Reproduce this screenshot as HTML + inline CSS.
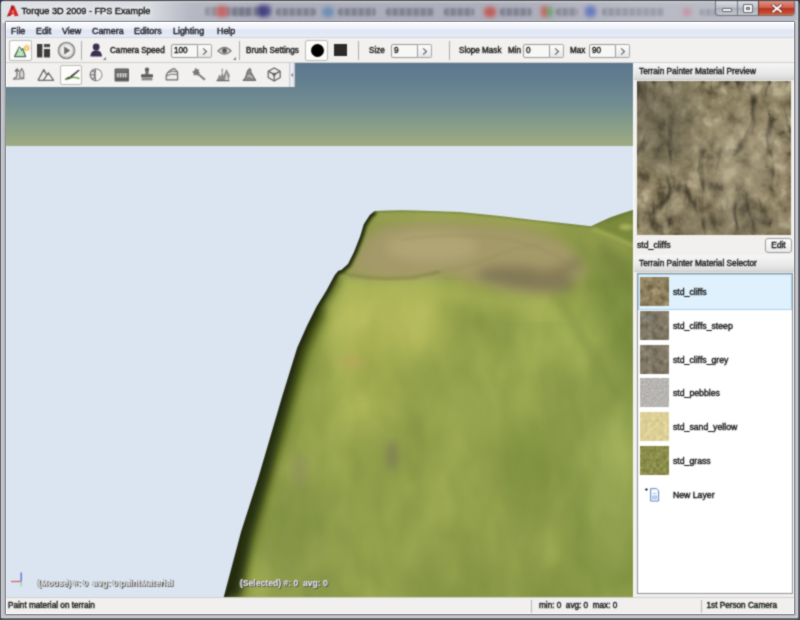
<!DOCTYPE html>
<html>
<head>
<meta charset="utf-8">
<title>Torque 3D 2009 - FPS Example</title>
<style>
*{box-sizing:border-box;margin:0;padding:0}
html,body{width:800px;height:620px;overflow:hidden}
body{position:relative;background:#c3ccd6;font-family:"Liberation Sans",sans-serif;font-size:11px;color:#0c0c0c;-webkit-text-stroke:0.38px #151515}
.abs{position:absolute}
.t{position:absolute;white-space:nowrap;line-height:14px;height:14px}
/* window frame */
#frame{left:0;top:0;width:800px;height:620px;background:#bdbfc4;overflow:hidden;filter:url(#soft)}
#titlebg{left:0;top:0;width:800px;height:23px;background:linear-gradient(#b3b4be,#adaebb 30%,#acadba 85%,#c6c9d0 92%)}
.blob{position:absolute;border-radius:40%;filter:blur(2px)}
.smg{filter:blur(1.3px);border-radius:3px}
#title{left:21.5px;top:3px;font-size:9.15px;line-height:16px;height:16px;color:#111;text-shadow:0 0 5px #fff,0 0 5px #fff,0 0 8px #fff}
/* content */
#content{left:6px;top:22px;width:788px;height:592px;background:#f1f0ee;overflow:hidden;filter:url(#soft)}
#menubar{left:0;top:0;width:788px;height:16px;background:linear-gradient(#fbfcfe,#eef1f9 45%,#dfe5f3 55%,#e6ebf7);border-bottom:1px solid #cfd5e2}
#menubar .t{top:2px;font-size:8.9px;line-height:14px;color:#1b1b2a}
#tb1{left:0;top:16px;width:788px;height:25px;background:#f2f1ef;border-bottom:1px solid #cfcfcf}
#tb1 .t{top:6px;font-size:8.15px;line-height:14px}
.sep{position:absolute;top:3px;width:1px;height:19px;background:#a9a9a9}
.inp{position:absolute;top:6px;height:14px;background:#f7f7f6;border:1px solid #999;border-radius:2px 0 0 2px;font-size:8.2px;line-height:12px;padding-left:2px}
.spin{position:absolute;top:6px;height:14px;width:14px;background:linear-gradient(#fdfdfd,#e6e6e6);border:1px solid #a5a5a5;border-left:none;border-radius:0 2px 2px 0}
.spin:after{content:"";position:absolute;left:2.5px;top:3.5px;width:4px;height:4px;border-top:1.6px solid #555;border-right:1.6px solid #555;transform:rotate(45deg)}
.selbtn{position:absolute;background:#fcfcfb;border:1px solid #b9b9b4;border-radius:2px}
#tb2{left:0;top:41px;width:288px;height:24px;background:#f2f1ef}
#tb2h{left:283px;top:41px;width:6px;height:24px;background:linear-gradient(90deg,#c3c7ce,#f2f3f6 45%,#eceef1 60%,#bcc1c9)}
/* viewport */
#view{left:0;top:41px;width:627px;height:534px;overflow:hidden;background:#dbe5f1}
#sky{left:0;top:0;width:627px;height:83px;background:linear-gradient(#5c768f,#65808f 25%,#728d90 50%,#889d88 75%,#9fab82)}
/* right panel */
#panel{left:627px;top:41px;width:161px;height:534px;background:#f1f0ee;border-left:1px solid #fafafa}
.hdr{position:absolute;left:0;width:160px;height:17px;background:linear-gradient(#f6f6f6,#e9e9e9 60%,#d9d9d9);border-bottom:1px solid #c8c8c8}
.hdr .t{left:5px;top:2px;font-size:8.25px;line-height:14px;color:#222}
#list{left:3px;top:210px;width:156px;height:321px;background:#fff;border:1px solid #8a8f96}
.row{position:absolute;left:0;width:154px;height:34px}
.row .t{left:35px;top:10px;font-size:8.7px;line-height:14px}
.th{position:absolute;left:2px;top:2px;width:29px;height:29px}
/* status */
#status{left:0;top:575px;width:788px;height:17px;background:#f1f0ee;border-top:1px solid #cfcfcf}
#status .t{top:1px;font-size:8.2px;line-height:14px}
.ssep{position:absolute;top:2px;width:1px;height:13px;background:#b5b5b5}
.ov{position:absolute;font-size:8.6px;font-weight:bold;color:#ececec;line-height:12px;white-space:nowrap;-webkit-text-stroke:0;text-shadow:1px 1px 0 #4a4a4a,-1px 0 0 #8a8a8a}
</style>
</head>
<body>

<svg width="0" height="0" style="position:absolute">
  <defs>
    <filter id="rock" x="0" y="0" width="100%" height="100%" color-interpolation-filters="sRGB">
      <feTurbulence type="fractalNoise" baseFrequency="0.06" numOctaves="5" seed="7" result="n"/>
      <feColorMatrix in="n" type="matrix" values="1.3 1.3 0 0 -0.8  1.3 1.3 0 0 -0.8  1.3 1.3 0 0 -0.8  0 0 0 0 1"/>
      <feComponentTransfer result="base">
        <feFuncR type="table" tableValues="0.34 0.44 0.51 0.56 0.60 0.66 0.72"/>
        <feFuncG type="table" tableValues="0.31 0.40 0.465 0.515 0.555 0.615 0.675"/>
        <feFuncB type="table" tableValues="0.23 0.30 0.355 0.395 0.435 0.495 0.555"/>
      </feComponentTransfer>
      <feTurbulence type="turbulence" baseFrequency="0.03 0.014" numOctaves="3" seed="23" result="v"/>
      <feColorMatrix in="v" type="matrix" values="1 0 0 0 0  1 0 0 0 0  1 0 0 0 0  0 0 0 0 1"/>
      <feComponentTransfer result="veins">
        <feFuncR type="table" tableValues="0.5 0.6 0.76 0.92 1 1 1 1 1 1 1 1 1 1 1 1 1 1 1 1"/>
        <feFuncG type="table" tableValues="0.5 0.6 0.76 0.92 1 1 1 1 1 1 1 1 1 1 1 1 1 1 1 1"/>
        <feFuncB type="table" tableValues="0.5 0.6 0.76 0.92 1 1 1 1 1 1 1 1 1 1 1 1 1 1 1 1"/>
      </feComponentTransfer>
      <feBlend in="base" in2="veins" mode="multiply"/>
    </filter>
    <filter id="rockgrey" x="0" y="0" width="100%" height="100%" color-interpolation-filters="sRGB">
      <feTurbulence type="fractalNoise" baseFrequency="0.16" numOctaves="4" seed="11" result="n"/>
      <feColorMatrix in="n" type="matrix" values="1.3 1.3 0 0 -0.8  1.3 1.3 0 0 -0.8  1.3 1.3 0 0 -0.8  0 0 0 0 1"/>
      <feComponentTransfer>
        <feFuncR type="table" tableValues="0.40 0.46 0.50 0.54 0.59"/>
        <feFuncG type="table" tableValues="0.37 0.43 0.465 0.50 0.55"/>
        <feFuncB type="table" tableValues="0.31 0.36 0.395 0.43 0.48"/>
      </feComponentTransfer>
    </filter>
    <filter id="rocksm" x="0" y="0" width="100%" height="100%" color-interpolation-filters="sRGB">
      <feTurbulence type="fractalNoise" baseFrequency="0.16" numOctaves="4" seed="5" result="n"/>
      <feColorMatrix in="n" type="matrix" values="1.3 1.3 0 0 -0.8  1.3 1.3 0 0 -0.8  1.3 1.3 0 0 -0.8  0 0 0 0 1"/>
      <feComponentTransfer>
        <feFuncR type="table" tableValues="0.44 0.51 0.56 0.60 0.66"/>
        <feFuncG type="table" tableValues="0.39 0.46 0.50 0.54 0.60"/>
        <feFuncB type="table" tableValues="0.27 0.33 0.37 0.41 0.47"/>
      </feComponentTransfer>
    </filter>
    <filter id="pebble" x="0" y="0" width="100%" height="100%" color-interpolation-filters="sRGB">
      <feTurbulence type="fractalNoise" baseFrequency="0.5" numOctaves="2" seed="2" result="n"/>
      <feColorMatrix in="n" type="matrix" values=".14 .14 0 0 0.575  .14 .14 0 0 0.565  .14 .14 0 0 0.555  0 0 0 0 1"/>
    </filter>
    <filter id="sand" x="0" y="0" width="100%" height="100%" color-interpolation-filters="sRGB">
      <feTurbulence type="fractalNoise" baseFrequency="0.25" numOctaves="3" seed="4" result="n"/>
      <feColorMatrix in="n" type="matrix" values=".12 .12 0 0 0.745  .12 .12 0 0 0.695  .12 .12 0 0 0.47  0 0 0 0 1"/>
    </filter>
    <filter id="grass" x="0" y="0" width="100%" height="100%" color-interpolation-filters="sRGB">
      <feTurbulence type="fractalNoise" baseFrequency="0.3" numOctaves="3" seed="9" result="n"/>
      <feColorMatrix in="n" type="matrix" values=".18 .18 0 0 0.36  .18 .18 0 0 0.37  .1 .1 0 0 0.19  0 0 0 0 1"/>
    </filter>
    <filter id="soft" x="0" y="0" width="100%" height="100%" color-interpolation-filters="sRGB"><feConvolveMatrix order="3" kernelMatrix="1 2 1 2 8 2 1 2 1" divisor="20" edgeMode="duplicate" preserveAlpha="true"/></filter>
    <filter id="cb" x="-20%" y="-20%" width="140%" height="140%"><feGaussianBlur stdDeviation="1.1"/></filter>
    <filter id="cb2" x="-20%" y="-20%" width="140%" height="140%"><feGaussianBlur stdDeviation="9"/></filter>
  </defs>
</svg>
<div id="frame" class="abs">
  <div id="titlebg" class="abs">
    <div class="blob smg" style="left:205px;top:7px;width:60px;height:9px;background:repeating-linear-gradient(90deg,#5f6070 0 2px,rgba(110,112,128,.35) 2px 3.5px,#6a6b7c 3.5px 5px,rgba(120,122,136,.2) 5px 7px);opacity:.75"></div>
    <div class="blob" style="left:216px;top:6px;width:12px;height:11px;background:#d8433c;opacity:.8"></div>
    <div class="blob smg" style="left:232px;top:8px;width:18px;height:8px;background:repeating-linear-gradient(90deg,#5f6070 0 2px,rgba(110,112,128,.35) 2px 3.5px,#6a6b7c 3.5px 5px,rgba(120,122,136,.2) 5px 7px);opacity:.75"></div>
    <div class="blob" style="left:257px;top:5px;width:14px;height:12px;background:#34307a;opacity:.8"></div>
    <div class="blob smg" style="left:276px;top:8px;width:40px;height:8px;background:repeating-linear-gradient(90deg,#5f6070 0 2px,rgba(110,112,128,.35) 2px 3.5px,#6a6b7c 3.5px 5px,rgba(120,122,136,.2) 5px 7px);opacity:.75"></div>
    <div class="blob" style="left:322px;top:7px;width:12px;height:10px;background:#5c86b4;opacity:.8"></div>
    <div class="blob smg" style="left:338px;top:8px;width:38px;height:8px;background:repeating-linear-gradient(90deg,#5f6070 0 2px,rgba(110,112,128,.35) 2px 3.5px,#6a6b7c 3.5px 5px,rgba(120,122,136,.2) 5px 7px);opacity:.75"></div>
    <div class="blob smg" style="left:386px;top:8px;width:48px;height:8px;background:repeating-linear-gradient(90deg,#5f6070 0 2px,rgba(110,112,128,.35) 2px 3.5px,#6a6b7c 3.5px 5px,rgba(120,122,136,.2) 5px 7px);opacity:.75"></div>
    <div class="blob smg" style="left:444px;top:8px;width:30px;height:8px;background:repeating-linear-gradient(90deg,#5f6070 0 2px,rgba(110,112,128,.35) 2px 3.5px,#6a6b7c 3.5px 5px,rgba(120,122,136,.2) 5px 7px);opacity:.75"></div>
    <div class="blob" style="left:484px;top:7px;width:12px;height:10px;background:#c8463e;opacity:.8"></div>
    <div class="blob smg" style="left:500px;top:8px;width:32px;height:8px;background:repeating-linear-gradient(90deg,#5f6070 0 2px,rgba(110,112,128,.35) 2px 3.5px,#6a6b7c 3.5px 5px,rgba(120,122,136,.2) 5px 7px);opacity:.75"></div>
    <div class="blob" style="left:541px;top:6px;width:7px;height:11px;background:#c94a38;opacity:.8"></div>
    <div class="blob" style="left:547px;top:7px;width:6px;height:10px;background:#4e9a4a;opacity:.8"></div>
    <div class="blob smg" style="left:556px;top:8px;width:22px;height:8px;background:repeating-linear-gradient(90deg,#5f6070 0 2px,rgba(110,112,128,.35) 2px 3.5px,#6a6b7c 3.5px 5px,rgba(120,122,136,.2) 5px 7px);opacity:.75"></div>
    <div class="blob" style="left:585px;top:6px;width:11px;height:11px;background:#3553b8;opacity:.8"></div>
    <div class="blob smg" style="left:602px;top:8px;width:62px;height:8px;background:repeating-linear-gradient(90deg,#5f6070 0 2px,rgba(110,112,128,.35) 2px 3.5px,#6a6b7c 3.5px 5px,rgba(120,122,136,.2) 5px 7px);opacity:.75"></div>
    <div class="blob" style="left:683px;top:8px;width:8px;height:8px;background:#c85a78;opacity:.7"></div>
    <div class="blob smg" style="left:700px;top:9px;width:26px;height:7px;background:repeating-linear-gradient(90deg,#5f6070 0 2px,rgba(110,112,128,.35) 2px 3.5px,#6a6b7c 3.5px 5px,rgba(120,122,136,.2) 5px 7px);opacity:.75"></div>
  </div>
  <div class="abs" style="left:0;top:0;width:800px;height:23px;background:linear-gradient(90deg,rgba(226,229,233,.92) 0,rgba(222,225,230,.88) 150px,rgba(200,203,210,.35) 190px,rgba(170,172,184,0) 260px,rgba(170,172,184,0) 520px,rgba(205,208,214,.35) 640px,rgba(205,208,214,.35) 800px)"></div>
  <div class="abs" style="left:0;top:0;width:800px;height:1px;background:#45464c"></div>
  <div class="abs" style="left:1px;top:1px;width:798px;height:1px;background:#dcdee2"></div>
  <div class="abs" style="left:0;top:0;width:1px;height:620px;background:#4b4d55"></div>
  <div class="abs" style="left:1px;top:1px;width:1px;height:618px;background:#e4e6ea"></div>
  <div class="abs" style="left:798px;top:0;width:2px;height:620px;background:#55575f"></div>
  <div class="abs" style="left:797px;top:1px;width:1px;height:618px;background:#e1e3e7"></div>
  <div class="abs" style="left:0;top:618px;width:800px;height:2px;background:#5a5c62"></div>
  <div class="abs" style="left:1px;top:617px;width:797px;height:1px;background:#e3e5e8"></div>
  <div class="abs" style="left:5px;top:21px;width:790px;height:594px;border:1px solid #75777d;border-radius:1px"></div>
  <!-- corners -->
  <svg class="abs" style="left:0;top:0" width="6" height="6"><path d="M0,0H6Q0,0 0,6Z" fill="#2b2c4f"/></svg>
  <svg class="abs" style="left:794px;top:0" width="6" height="6"><path d="M6,0H0Q6,0 6,6Z" fill="#33343c"/></svg>
  <svg class="abs" style="left:0;top:614px" width="6" height="6"><path d="M0,6H6Q0,6 0,0Z" fill="#4a4b52"/></svg>
  <svg class="abs" style="left:794px;top:614px" width="6" height="6"><path d="M6,6H0Q6,6 6,0Z" fill="#4a4b52"/></svg>
  <!-- app icon -->
  <svg class="abs" style="left:6px;top:4px" width="14" height="14" viewBox="0 0 14 14"><path d="M5.6,1.2 L8.2,1.8 L12.6,11.8 L8.8,12.2 L7.4,9.6 L4.6,11.6 L1,12.4 Z" fill="#d8262a"/><path d="M5.8,1 L7.4,4.4 L5.2,5.6 Z" fill="#5e1f22"/><path d="M6.8,6 L8.2,8.6 L5.8,8.8Z" fill="#f2a0a0"/><path d="M1,12.4 L3,9.4 L4.6,11.6Z" fill="#7a2024"/></svg>
  <div id="title" class="t">Torque 3D 2009 - FPS Example</div>
  <!-- window buttons -->
  <div class="abs" style="left:715px;top:1px;width:80px;height:15px;border:1px solid #6e7078;border-top:none;border-radius:0 0 4px 4px;background:linear-gradient(#d9dce1,#bfc3ca 45%,#a9adb6 50%,#c2c6cd);overflow:hidden">
    <div class="abs" style="left:21px;top:0;width:1px;height:15px;background:#74767e"></div>
    <div class="abs" style="left:42px;top:0;width:37px;height:15px;border-left:1px solid #6a3a36;background:linear-gradient(#dc9486,#cd5f4e 45%,#ba3422 50%,#c8492f 80%,#dd7f52)"></div>
    <div class="abs" style="left:6px;top:7px;width:10px;height:4px;background:#fafafa;border:1px solid #62646b;border-radius:1px"></div>
    <div class="abs" style="left:27px;top:3px;width:10px;height:9px;background:#fafafa;border:1px solid #62646b;border-radius:1px"></div>
    <div class="abs" style="left:30px;top:6px;width:4px;height:3px;background:#b8bcc4;border:1px solid #62646b"></div>
    <svg class="abs" style="left:55px;top:3px" width="12" height="9" viewBox="0 0 12 9"><path d="M2.2,1.4 L9.8,7.6 M9.8,1.4 L2.2,7.6" stroke="#6a3030" stroke-width="3.4" stroke-linecap="square"/><path d="M2.2,1.4 L9.8,7.6 M9.8,1.4 L2.2,7.6" stroke="#fdfdfd" stroke-width="2" stroke-linecap="square"/></svg>
  </div>
</div>
<div id="content" class="abs">
  <div id="menubar" class="abs">
    <div class="t" style="left:5px">File</div>
    <div class="t" style="left:30px">Edit</div>
    <div class="t" style="left:56px">View</div>
    <div class="t" style="left:86px">Camera</div>
    <div class="t" style="left:128px">Editors</div>
    <div class="t" style="left:167px">Lighting</div>
    <div class="t" style="left:211px">Help</div>
  </div>
  <div id="tb1" class="abs">
    <div class="selbtn" style="left:3px;top:2px;width:23px;height:21px"></div>

    <svg class="abs" style="left:6px;top:4px" width="19" height="17" viewBox="0 0 19 17"><circle cx="14.6" cy="6.2" r="2.3" fill="#f8e27a" stroke="#eea64a" stroke-width=".8"/><path d="M14.6,2.4 v1 M17.6,3.2 l-.8,.8 M18.6,6.2 h-1.1 M17.6,9.2 l-.8,-.8 M11.8,3.4 l.7,.7" stroke="#ee9a3a" stroke-width=".7"/><path d="M2.6,14.6 L7.4,5 L9.4,8 L10.6,6.6 L13.6,14.6 Z" fill="#b9e6bd" stroke="#4f6a52" stroke-width="1.3" stroke-linejoin="round"/><path d="M6.4,8 L7.4,5.4 L9,8.2" fill="#eef8ee"/></svg>
    <svg class="abs" style="left:31px;top:6px" width="14" height="14" viewBox="0 0 14 14"><rect x="0" y="0" width="5.4" height="13.4" fill="#3b3b3b"/><rect x="7" y="0" width="6" height="3.2" fill="#4a4a4a"/><rect x="7" y="5" width="6" height="8.4" fill="#3b3b3b"/></svg>
    <svg class="abs" style="left:51px;top:3px" width="19" height="19" viewBox="0 0 19 19"><circle cx="9.5" cy="9.5" r="8" fill="#ededed" stroke="#858585" stroke-width="1.6"/><circle cx="9.5" cy="9.5" r="6.2" fill="none" stroke="#d0d0d0" stroke-width="1"/><path d="M7.2,5.6 L13.2,9.5 L7.2,13.4 Z" fill="#6a6a6a"/></svg>
    <svg class="abs" style="left:83px;top:5px" width="18" height="18" viewBox="0 0 18 18"><circle cx="7.2" cy="4" r="3.4" fill="#3c2f52"/><path d="M1.4,13.6 Q1.4,7.6 7.2,7.2 Q13,7.6 13,13.6 Z" fill="#3c2f52"/><path d="M17,14 L17,17 L14,17 Z" fill="#777"/></svg>
    <svg class="abs" style="left:211px;top:7px" width="20" height="16" viewBox="0 0 20 16"><path d="M1,6 Q7.5,-1 14,6 Q7.5,12 1,6 Z" fill="#e4e4e4" stroke="#7b7b7b" stroke-width="1.3"/><circle cx="7.5" cy="5.6" r="2.7" fill="#6f6f6f"/><circle cx="7.5" cy="5.6" r="1.1" fill="#3f3f3f"/><path d="M19,12 L19,15 L16,15 Z" fill="#777"/></svg>
    <div class="sep" style="left:75px"></div>
    <div class="t" style="left:104px">Camera Speed</div>
    <div class="inp" style="left:165px;width:27px">100</div><div class="spin" style="left:192px"></div>
    <div class="sep" style="left:233px"></div>
    <div class="t" style="left:240px">Brush Settings</div>
    <div class="selbtn" style="left:299px;top:2px;width:23px;height:21px"></div>
    <div class="abs" style="left:305px;top:6px;width:13px;height:13px;border-radius:50%;background:#000"></div>
    <div class="abs" style="left:328px;top:6px;width:13px;height:12px;background:#2b2a29"></div>
    <div class="sep" style="left:352px"></div>
    <div class="t" style="left:363px">Size</div>
    <div class="inp" style="left:385px;width:27px">9</div><div class="spin" style="left:412px"></div>
    <div class="sep" style="left:443px"></div>
    <div class="t" style="left:453px">Slope Mask</div>
    <div class="t" style="left:502px">Min</div>
    <div class="inp" style="left:517px;width:27px">0</div><div class="spin" style="left:544px"></div>
    <div class="t" style="left:564px">Max</div>
    <div class="inp" style="left:583px;width:27px">90</div><div class="spin" style="left:610px"></div>
  </div>
  <div id="view" class="abs">
    <div id="sky" class="abs"></div>
    <!--TERRAIN-START-->
<svg class="abs" style="left:0;top:0" width="627" height="534" viewBox="6 63 627 534">
  <defs>
    <clipPath id="tc"><path d="M374.7,211 Q395,210 416,210.5 L460,212 L500,216 L531.6,219.7 L560,222.8 L591,226.2 L600,222 L610,217.5 L620,214 L634,209.5 L634,598 L223.5,598 L241,532 L258,479 L282,397 L297.3,347.6 L307,325.8 L316.6,306.5 L326.3,290.7 L334.8,275 L338.4,270.8 L341.3,270 L348,264 L354,252 L360.2,236.3 L363.8,224.2 L369.8,215 Z"/></clipPath>
    <linearGradient id="tg" x1="0" y1="0" x2="1" y2="0.2">
      <stop offset="0" stop-color="#98ac50"/><stop offset="0.5" stop-color="#8fa54d"/><stop offset="1" stop-color="#859c47"/>
    </linearGradient>
    <filter id="tint" x="0" y="0" width="100%" height="100%" color-interpolation-filters="sRGB"><feColorMatrix type="matrix" values="1.015 0 0 0 0  0 0.965 0 0 0  0 0 0.98 0 0  0 0 0 1 0"/></filter>
    <filter id="b4" x="-20%" y="-20%" width="140%" height="140%"><feGaussianBlur stdDeviation="4"/></filter>
    <filter id="b6" x="-30%" y="-30%" width="160%" height="160%"><feGaussianBlur stdDeviation="6"/></filter>
    <filter id="b8" x="-30%" y="-30%" width="160%" height="160%"><feGaussianBlur stdDeviation="8"/></filter>
    <filter id="b14" x="-40%" y="-40%" width="180%" height="180%"><feGaussianBlur stdDeviation="14"/></filter>
    <filter id="b2" x="-20%" y="-20%" width="140%" height="140%"><feGaussianBlur stdDeviation="1.8"/></filter>
    <filter id="b1" x="-20%" y="-20%" width="140%" height="140%"><feGaussianBlur stdDeviation="0.9"/></filter>
    <filter id="tnoise" x="0" y="0" width="100%" height="100%" color-interpolation-filters="sRGB">
      <feTurbulence type="fractalNoise" baseFrequency="0.022 0.012" numOctaves="3" seed="14"/>
      <feColorMatrix type="matrix" values="0 0 0 0 0.95  0 0 0 0 1  0 0 0 0 0.55  1.6 1.6 0 0 -1.35"/>
    </filter>
    <filter id="tnoise2" x="0" y="0" width="100%" height="100%" color-interpolation-filters="sRGB">
      <feTurbulence type="fractalNoise" baseFrequency="0.02 0.011" numOctaves="3" seed="31"/>
      <feColorMatrix type="matrix" values="0 0 0 0 0.25  0 0 0 0 0.36  0 0 0 0 0.1  1.6 1.6 0 0 -1.4"/>
    </filter>
  </defs>
  <g clip-path="url(#tc)" filter="url(#tint)">
    <rect x="200" y="200" width="440" height="400" fill="url(#tg)"/>
    <!-- broad tonal zones -->
    <g filter="url(#b14)">
      <ellipse cx="390" cy="320" rx="60" ry="40" fill="#aebd5c"/>
      <ellipse cx="365" cy="385" rx="38" ry="50" fill="#a9ba59" opacity=".8"/>
      <ellipse cx="560" cy="335" rx="45" ry="35" fill="#9fb557" opacity=".8"/>
      <ellipse cx="470" cy="520" rx="90" ry="60" fill="#92a84f" opacity=".8"/>
      <ellipse cx="625" cy="300" rx="22" ry="70" fill="#70893c" opacity=".9"/>
      <ellipse cx="610" cy="470" rx="40" ry="110" fill="#8ea651"/>
      <ellipse cx="300" cy="530" rx="40" ry="80" fill="#80964a" opacity=".6"/>
      <ellipse cx="470" cy="400" rx="40" ry="50" fill="#99ae55" opacity=".7"/>
      <ellipse cx="520" cy="455" rx="30" ry="40" fill="#839b45" opacity=".7"/>
    </g>
    <!-- texture noise -->
    <rect x="200" y="200" width="440" height="400" filter="url(#tnoise)" opacity=".17"/>
    <rect x="200" y="200" width="440" height="400" filter="url(#tnoise2)" opacity=".17"/>
    <!-- plateau top -->
    <g filter="url(#b6)">
      <path d="M372,212 L470,213 L600,228 L634,214 L634,270 L570,280 L470,262 L400,276 L340,272 Z" fill="#8c9f4b"/>
      <path d="M379,228 L420,222 L470,223 L520,228 L550,236 L572,250 L586,266 L578,284 L556,294 L530,296 L500,292 L475,284 L450,276 L420,278 L390,280 L350,275 L360,246 Z" fill="#a29f6b"/>
      <path d="M390,232 L470,228 L520,233 L550,242 L572,258 L572,280 L550,290 L500,288 L450,272 L390,274 L366,268 L370,246 Z" fill="#a29f6b"/>
      <ellipse cx="432" cy="247" rx="46" ry="15" fill="#adab77"/>
      <ellipse cx="526" cy="279" rx="50" ry="12" fill="#807e58" transform="rotate(6 528 279)"/>
      <path d="M540,276 Q566,272 578,262" fill="none" stroke="#85835a" stroke-width="12" stroke-linecap="round"/>
      <path d="M372,214 L470,215 L560,225" fill="none" stroke="#9bad55" stroke-width="7"/>
    </g>
    <g filter="url(#b2)" fill="none" stroke="#8a8355" stroke-width="1.6" opacity=".35">
      <path d="M431,273 Q470,268 496,255 Q520,246 542,245"/>
      <path d="M400,240 Q450,232 500,238 Q540,244 566,262"/>
    </g>
    <!-- ledge line + brighter band under it -->
    <g filter="url(#b8)">
      <path d="M336,288 L390,293 L450,292 L500,302 L560,314" stroke="#a9ba5b" stroke-width="16" fill="none" opacity=".8" stroke-linecap="round"/>
    </g>
    <g filter="url(#b2)">
      <path d="M338.4,271 L350.5,275 L370,277.6 L388,278.8 L412,277.6 L440,272" stroke="#6c7240" stroke-width="2" fill="none" opacity=".65"/>
    </g>
    <!-- right hill -->
    <g filter="url(#b2)">
      <path d="M591,226.5 L600,222 L614,215.6 L634,209.5 L634,246 L612,236 Z" fill="#788e3e"/>
      <path d="M606,222 L620,216 L634,213" stroke="#6d7f3a" stroke-width="3" fill="none" opacity=".8"/>
      <ellipse cx="626" cy="227" rx="7" ry="3" fill="#a3b65c"/>
      <path d="M593,229 L612,236 L634,246" stroke="#9fb357" stroke-width="4" fill="none" opacity=".85"/>
    </g>
    <g filter="url(#b4)">
      <path d="M598,240 L634,262 L634,290 L600,262 Z" fill="#6f863a" opacity=".7"/>
      <path d="M575,240 L634,300 M590,262 L634,330 M560,300 L620,400" stroke="#748c3e" stroke-width="8" opacity=".45" fill="none"/>
    </g>
    <!-- spots -->
    <g filter="url(#b4)">
      <ellipse cx="392" cy="455" rx="7" ry="15" fill="#74735a" opacity=".55"/>
      <ellipse cx="352" cy="362" rx="14" ry="8" fill="#b5a962" opacity=".45"/>
      <ellipse cx="300" cy="470" rx="7" ry="18" fill="#90906a" opacity=".4"/>
    </g>
    <!-- dark left edge -->
    <g filter="url(#b6)">
      <path d="M223.5,598 L241,532 L258,479 L282,397 L297.3,347.6 L307,325.8 L316.6,306.5" fill="none" stroke="#556a22" stroke-width="30" opacity=".6"/>
    </g>
    <g filter="url(#b4)">
      <path d="M223.5,598 L241,532 L258,479 L282,397 L297.3,347.6 L307,325.8 L316.6,306.5 L326.3,290.7 L334.8,275" fill="none" stroke="#3d4f18" stroke-width="15" opacity=".85"/>
    </g>
    <g filter="url(#b4)">
      <path d="M215,598 L241,532 L258,479 L282,397 L297.3,347.6 L307,325.8 L316.6,306.5 L322,309 L312,330 L303,352 L290,400 L268,482 L252,536 L240,598 Z" fill="#1f2a0a" opacity=".9"/>
    </g>
    <g filter="url(#b2)">
      <path d="M223.5,598 L241,532 L258,479 L282,397 L297.3,347.6 L307,325.8 L316.6,306.5 L326.3,290.7 L334.8,275 L338.4,270.8 L341.3,270 L348,264 L354,252 L360.2,236.3 L363.8,224.2 L369.8,215 L374.7,211" fill="none" stroke="#202b0b" stroke-width="7"/>
    </g>
    <g filter="url(#b1)">
      <path d="M374.7,211 Q395,210 416,210.5 L460,212 L500,216 L531.6,219.7 L560,222.8 L591,226.2 L600,222 L610,217.5 L620,214 L634,209.5" fill="none" stroke="#55652a" stroke-width="1.6" opacity=".8"/>
    </g>
  </g>
</svg>
<!--TERRAIN-END-->
    <svg class="abs" style="left:4px;top:508px" width="14" height="18" viewBox="0 0 14 18"><path d="M1,10.5 H11" stroke="#e2606a" stroke-width="1.3"/><path d="M11.2,1.5 V10.5" stroke="#5468d8" stroke-width="1.3"/><path d="M11.2,10.5 V15.5" stroke="#86d890" stroke-width="1.2"/></svg>
    <div class="ov" style="left:32px;top:514px">(Mouse) #: 0&nbsp; avg: 0 paintMaterial</div>
    <div class="ov" style="left:234px;top:514px">(Selected) #: 0&nbsp; avg: 0</div>
  </div>
  <div id="tb2" class="abs">
    <div class="selbtn" style="left:54px;top:2px;width:22px;height:20px"></div>
    <svg class="abs" style="left:6px;top:4px" width="15" height="14" viewBox="0 0 15 14"><path d="M1.5,12 L5,9.5 L5,2.5 M3,4.5 L5,2 L7,4.5" fill="none" stroke="#6c6c6c" stroke-width="1.3"/><path d="M9.6,1.6 Q12.8,5 11.6,10.4 Q9.6,11.6 7.8,10.4 Q6.8,5 9.6,1.6Z" fill="#d8d8d8" stroke="#707070" stroke-width="1.1"/><path d="M1,12.2 L12.4,11.6" stroke="#7a7a7a" stroke-width="1.2"/></svg>
    <svg class="abs" style="left:31px;top:5px" width="18" height="14" viewBox="0 0 18 14"><path d="M1,12.4 L6.8,1.6 L10,7.4" fill="none" stroke="#6a6a6a" stroke-width="1.3" stroke-linejoin="round"/><path d="M6.4,12.4 L11.4,4.8 L16.6,12.4 Z" fill="#f5f5f5" stroke="#6a6a6a" stroke-width="1.3" stroke-linejoin="round"/><path d="M1,12.4 H7" stroke="#6a6a6a" stroke-width="1.3"/><path d="M5.6,4 L6.8,3 L8,4.4" stroke="#6a6a6a" stroke-width=".9" fill="none"/></svg>
    <svg class="abs" style="left:57px;top:5px" width="18" height="14" viewBox="0 0 18 14"><path d="M2,11.6 Q9,7.6 16.4,10.6" fill="none" stroke="#5a9a3c" stroke-width="1.2"/><path d="M2,11.4 Q4.2,8.4 6.8,8.4 L8.2,10 Q5.4,12 2,11.4Z" fill="#4a5a3a"/><path d="M7,8.2 L15.8,1.6 L16.6,2.6 L8.4,9.8Z" fill="#3e3e3e"/></svg>
    <svg class="abs" style="left:83px;top:5px" width="15" height="14" viewBox="0 0 15 14"><circle cx="7" cy="6.8" r="5.8" fill="#e6e6e6" stroke="#6e6e6e" stroke-width="1.2"/><path d="M7,1 V12.6 M1.4,6.8 H7 M3,2.8 Q5,4 7,3.8 M3,10.8 Q5,9.6 7,9.8" fill="none" stroke="#6e6e6e" stroke-width="1"/><path d="M7,1 Q3.4,6.8 7,12.6" fill="none" stroke="#6e6e6e" stroke-width="1"/><path d="M7,1.2 A5.6,5.6 0 0 1 7,12.4 Z" fill="#f3f3f3"/></svg>
    <svg class="abs" style="left:108px;top:5px" width="16" height="14" viewBox="0 0 16 14"><rect x=".6" y=".6" width="14.4" height="12.8" rx="1" fill="#5c5c5c"/><rect x="2" y="5" width="11.6" height="4.4" fill="#8a8a8a"/><path d="M4,5 V9.4 M6.6,5 V9.4 M9.2,5 V9.4 M11.6,5 V9.4" stroke="#e8e8e8" stroke-width="1"/><rect x="2" y="2" width="11.6" height="1.6" fill="#777"/></svg>
    <svg class="abs" style="left:134px;top:4px" width="14" height="14" viewBox="0 0 14 14"><circle cx="7" cy="2.8" r="2.2" fill="#5e5e5e"/><path d="M5.8,4 H8.2 L8.8,7.4 H5.2Z" fill="#6a6a6a"/><rect x="1" y="7.2" width="12" height="3.2" rx=".8" fill="#5a5a5a"/><rect x="1.6" y="10.8" width="10.8" height="2.6" fill="#8c8c8c"/></svg>
    <svg class="abs" style="left:159px;top:4px" width="14" height="14" viewBox="0 0 14 14"><path d="M1.2,12.8 V8.4 Q3.2,3.2 9.4,1.6 L12.6,4.8 V12.8 Z" fill="#ececec" stroke="#6c6c6c" stroke-width="1.2" stroke-linejoin="round"/><path d="M1.4,9 Q6,6 12.4,7.6 M3.6,5.4 Q7.6,3.4 12,5" fill="none" stroke="#6c6c6c" stroke-width="1"/></svg>
    <svg class="abs" style="left:186px;top:4px" width="15" height="15" viewBox="0 0 15 15"><path d="M3.6,1.2 l1,1.8 2,-.4 -.6,2 1.6,1.2 -2,.6 -.2,2 -1.6,-1.2 -1.8,1 .2,-2.2 L.6,5 2.6,4.2Z" fill="#777" stroke="#5e5e5e" stroke-width=".6"/><path d="M6,5.8 L13.6,12 L12.2,13.6 L5,7.2Z" fill="#7a7a7a"/></svg>
    <svg class="abs" style="left:210px;top:4px" width="15" height="15" viewBox="0 0 15 15"><path d="M.8,13.4 L3.4,7.4 L5,9.6 L6.2,3.4 L7.4,9 L10.4,2 L13.8,8.2 L12.6,13.4Z" fill="#8a8a8a"/><path d="M5.4,4.2 L6.2,.8 L7,4.2" fill="#707070"/><path d="M.6,13.6 H13.4" stroke="#5e5e5e" stroke-width="1.2"/><path d="M9,13 L10.6,5.6 L12.2,13" fill="#dcdcdc"/></svg>
    <svg class="abs" style="left:236px;top:4px" width="15" height="15" viewBox="0 0 15 15"><path d="M1,13.4 Q3.4,11.6 4.4,8 Q5.2,2.4 7.6,1.4 Q9.4,1.6 8.8,4.8 Q10.8,8.6 13.8,13.4Z" fill="#8a8a8a" stroke="#606060" stroke-width="1"/><path d="M5.4,9 Q8,8 10.6,10.6" stroke="#e0e0e0" stroke-width="1" fill="none"/></svg>
    <svg class="abs" style="left:261px;top:4px" width="15" height="15" viewBox="0 0 15 15"><path d="M7.2,1 L13.2,4.2 V10.6 L7.2,14 L1.2,10.6 V4.2Z" fill="#ececec" stroke="#5e5e5e" stroke-width="1.2" stroke-linejoin="round"/><path d="M7.2,7.4 L13,4.4 M7.2,7.4 L1.4,4.4 M7.2,7.4 V13.8" stroke="#5e5e5e" stroke-width="1.2"/><circle cx="7.2" cy="7.4" r="1.6" fill="#5e5e5e"/></svg>

  </div>
  <div id="tb2h" class="abs"><div class="abs" style="left:1.5px;top:9.5px;border-right:2.5px solid #777;border-top:2.5px solid transparent;border-bottom:2.5px solid transparent"></div></div>
  <div id="panel" class="abs">
    <div class="hdr" style="top:0"><div class="t">Terrain Painter Material Preview</div></div>
    <svg class="abs" style="left:3px;top:18px" width="154" height="154" viewBox="0 0 154 154">
      <rect width="154" height="154" filter="url(#rock)"/>
      <g filter="url(#cb2)"><ellipse cx="105" cy="75" rx="40" ry="45" fill="#b8ad90" opacity=".35"/><ellipse cx="25" cy="40" rx="35" ry="50" fill="#5a5644" opacity=".4"/><ellipse cx="90" cy="140" rx="60" ry="18" fill="#6a624c" opacity=".35"/></g>
      
    </svg>
    <div class="t" style="left:3px;top:175px;font-size:8.7px">std_cliffs</div>
    <div class="abs" style="left:131px;top:175px;width:27px;height:15px;border:1px solid #9a9a9a;border-radius:3px;background:linear-gradient(#fdfdfd,#e9e9e9);font-size:8.3px;line-height:13px;text-align:center">Edit</div>
    <div class="hdr" style="top:192px"><div class="t">Terrain Painter Material Selector</div></div>
    <div id="list" class="abs">
      <div class="row" style="top:0;height:36px;background:#def1fc;border:1px solid #a9d3ee"><svg class="th" style="left:1px;top:2px" width="29" height="29"><rect width="29" height="29" filter="url(#rocksm)"/></svg><div class="t" style="left:34px;top:10px">std_cliffs</div></div>
      <div class="row" style="top:34.8px"><svg class="th" width="29" height="29"><rect width="29" height="29" filter="url(#rockgrey)"/><rect x="1" y="6" width="12" height="3" fill="#6f7f90" opacity=".45"/></svg><div class="t">std_cliffs_steep</div></div>
      <div class="row" style="top:68.6px"><svg class="th" width="29" height="29"><rect width="29" height="29" filter="url(#rockgrey)"/></svg><div class="t">std_cliffs_grey</div></div>
      <div class="row" style="top:102.4px"><svg class="th" width="29" height="29"><rect width="29" height="29" filter="url(#pebble)"/></svg><div class="t">std_pebbles</div></div>
      <div class="row" style="top:136.2px"><svg class="th" width="29" height="29"><rect width="29" height="29" filter="url(#sand)"/></svg><div class="t">std_sand_yellow</div></div>
      <div class="row" style="top:170px"><svg class="th" width="29" height="29"><rect width="29" height="29" filter="url(#grass)"/></svg><div class="t">std_grass</div></div>
      <div class="row" style="top:203.8px"><svg class="abs" style="left:6px;top:9px" width="18" height="16" viewBox="0 0 18 16"><path d="M2.4,1 V4 M.9,2.5 H3.9" stroke="#333" stroke-width="1"/><path d="M6.6,1.6 H12.6 L14.6,3.6 V14 H6.6Z" fill="#f8fbfe" stroke="#4a78b4" stroke-width=".9"/><path d="M8.6,9 H12.6 V11.6 H8.6Z" fill="#cfe0f2" stroke="#7fa3cc" stroke-width=".7"/><path d="M8.6,6.4 H12.4" stroke="#9bb8d8" stroke-width=".8"/></svg><div class="t">New Layer</div></div>
    </div>
  </div>
  <div id="status" class="abs">
    <div class="t" style="left:2px">Paint material on terrain</div>
    <div class="ssep" style="left:525px"></div>
    <div class="t" style="left:533px">min: 0&nbsp; avg: 0&nbsp; max: 0</div>
    <div class="ssep" style="left:695px"></div>
    <div class="t" style="left:700.5px">1st Person Camera</div>
  </div>
</div>
</body>
</html>
